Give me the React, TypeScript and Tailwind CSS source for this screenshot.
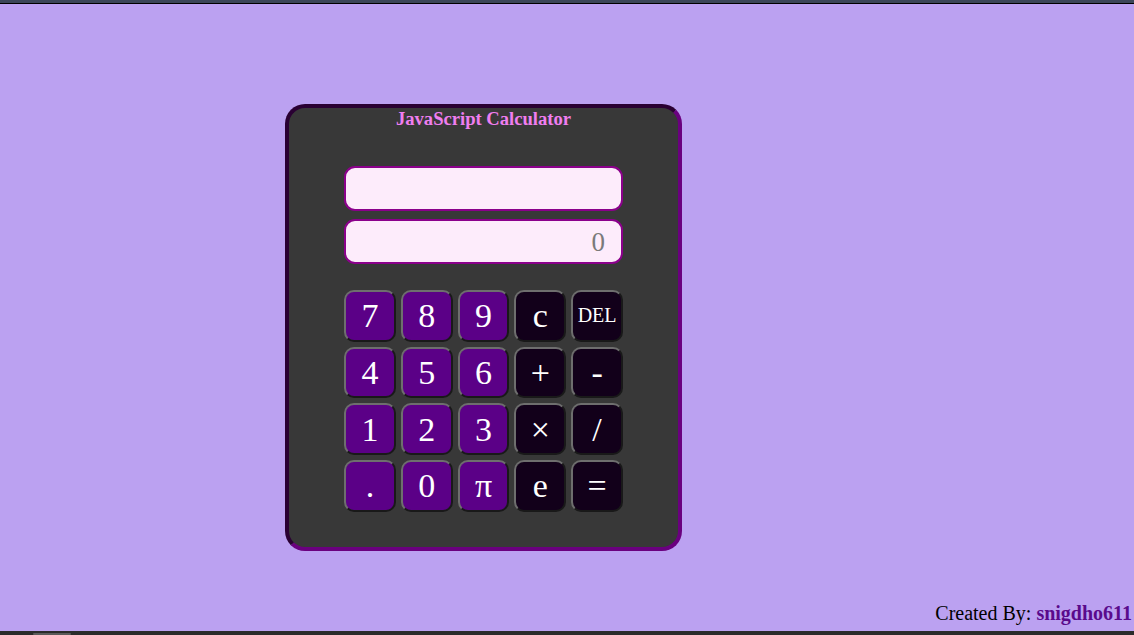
import React from "react";

const rows: { label: string; dark?: boolean; small?: boolean }[][] = [
  [{ label: "7" }, { label: "8" }, { label: "9" }, { label: "c", dark: true }, { label: "DEL", dark: true, small: true }],
  [{ label: "4" }, { label: "5" }, { label: "6" }, { label: "+", dark: true }, { label: "-", dark: true }],
  [{ label: "1" }, { label: "2" }, { label: "3" }, { label: "×", dark: true }, { label: "/", dark: true }],
  [{ label: "." }, { label: "0" }, { label: "π" }, { label: "e", dark: true }, { label: "=", dark: true }],
];

export default function App() {
  return (
    <div className="h-[635px] w-[1134px] flex flex-col overflow-hidden font-['Liberation_Serif',serif]">
      <div className="h-[4px] bg-[#3b4658] border-b border-black shrink-0" />
      <div className="flex-1 bg-[#bba1f1] flex flex-col">
        <div className="mt-[100px] ml-[285px] w-[397px] h-[447px] rounded-[20px] border-4 border-t-[#2a0033] border-l-[#2a0033] border-b-[#6a007f] border-r-[#6a007f] bg-[#383838] flex flex-col items-center">
          <div className="text-[18.6px] leading-[22px] font-bold text-[#f07ef0]">JavaScript Calculator</div>
          <div className="mt-[36px] w-[279px] h-[45px] rounded-[11px] border-2 border-[#8b008b] bg-[#fdecfb]" />
          <div className="mt-[8px] w-[279px] h-[45px] rounded-[11px] border-2 border-[#8b008b] bg-[#fdecfb] flex items-center justify-end pr-[16px] pt-[1px] text-[27px] text-[#7a7a7a]">0</div>
          <div className="mt-[26px] grid grid-cols-5 auto-rows-[51.7px] gap-[5px] w-[279px]">
            {rows.flat().map((b, i) => (
              <div
                key={i}
                className={`rounded-[10px] border-2 [border-style:outset] border-[#6e6e6e] flex items-center justify-center text-white leading-none ${
                  b.dark ? "bg-[#12001a]" : "bg-[#5b0087]"
                } ${b.small ? "text-[20px] pb-[1px]" : "text-[34px] pt-[1px]"}`}
              >
                {b.label}
              </div>
            ))}
          </div>
        </div>
        <div className="mt-auto mb-[6px] self-end pr-[2px] text-[20px] leading-[24px] text-black">
          Created By: <span className="font-bold text-[#5a0a8c]">snigdho611</span>
        </div>
      </div>
      <div className="h-[4px] bg-[#2b2b2b] shrink-0 relative">
        <div className="absolute left-[33px] top-[2px] h-[2px] w-[38px] rounded bg-[#5a5a5a]" />
      </div>
    </div>
  );
}
